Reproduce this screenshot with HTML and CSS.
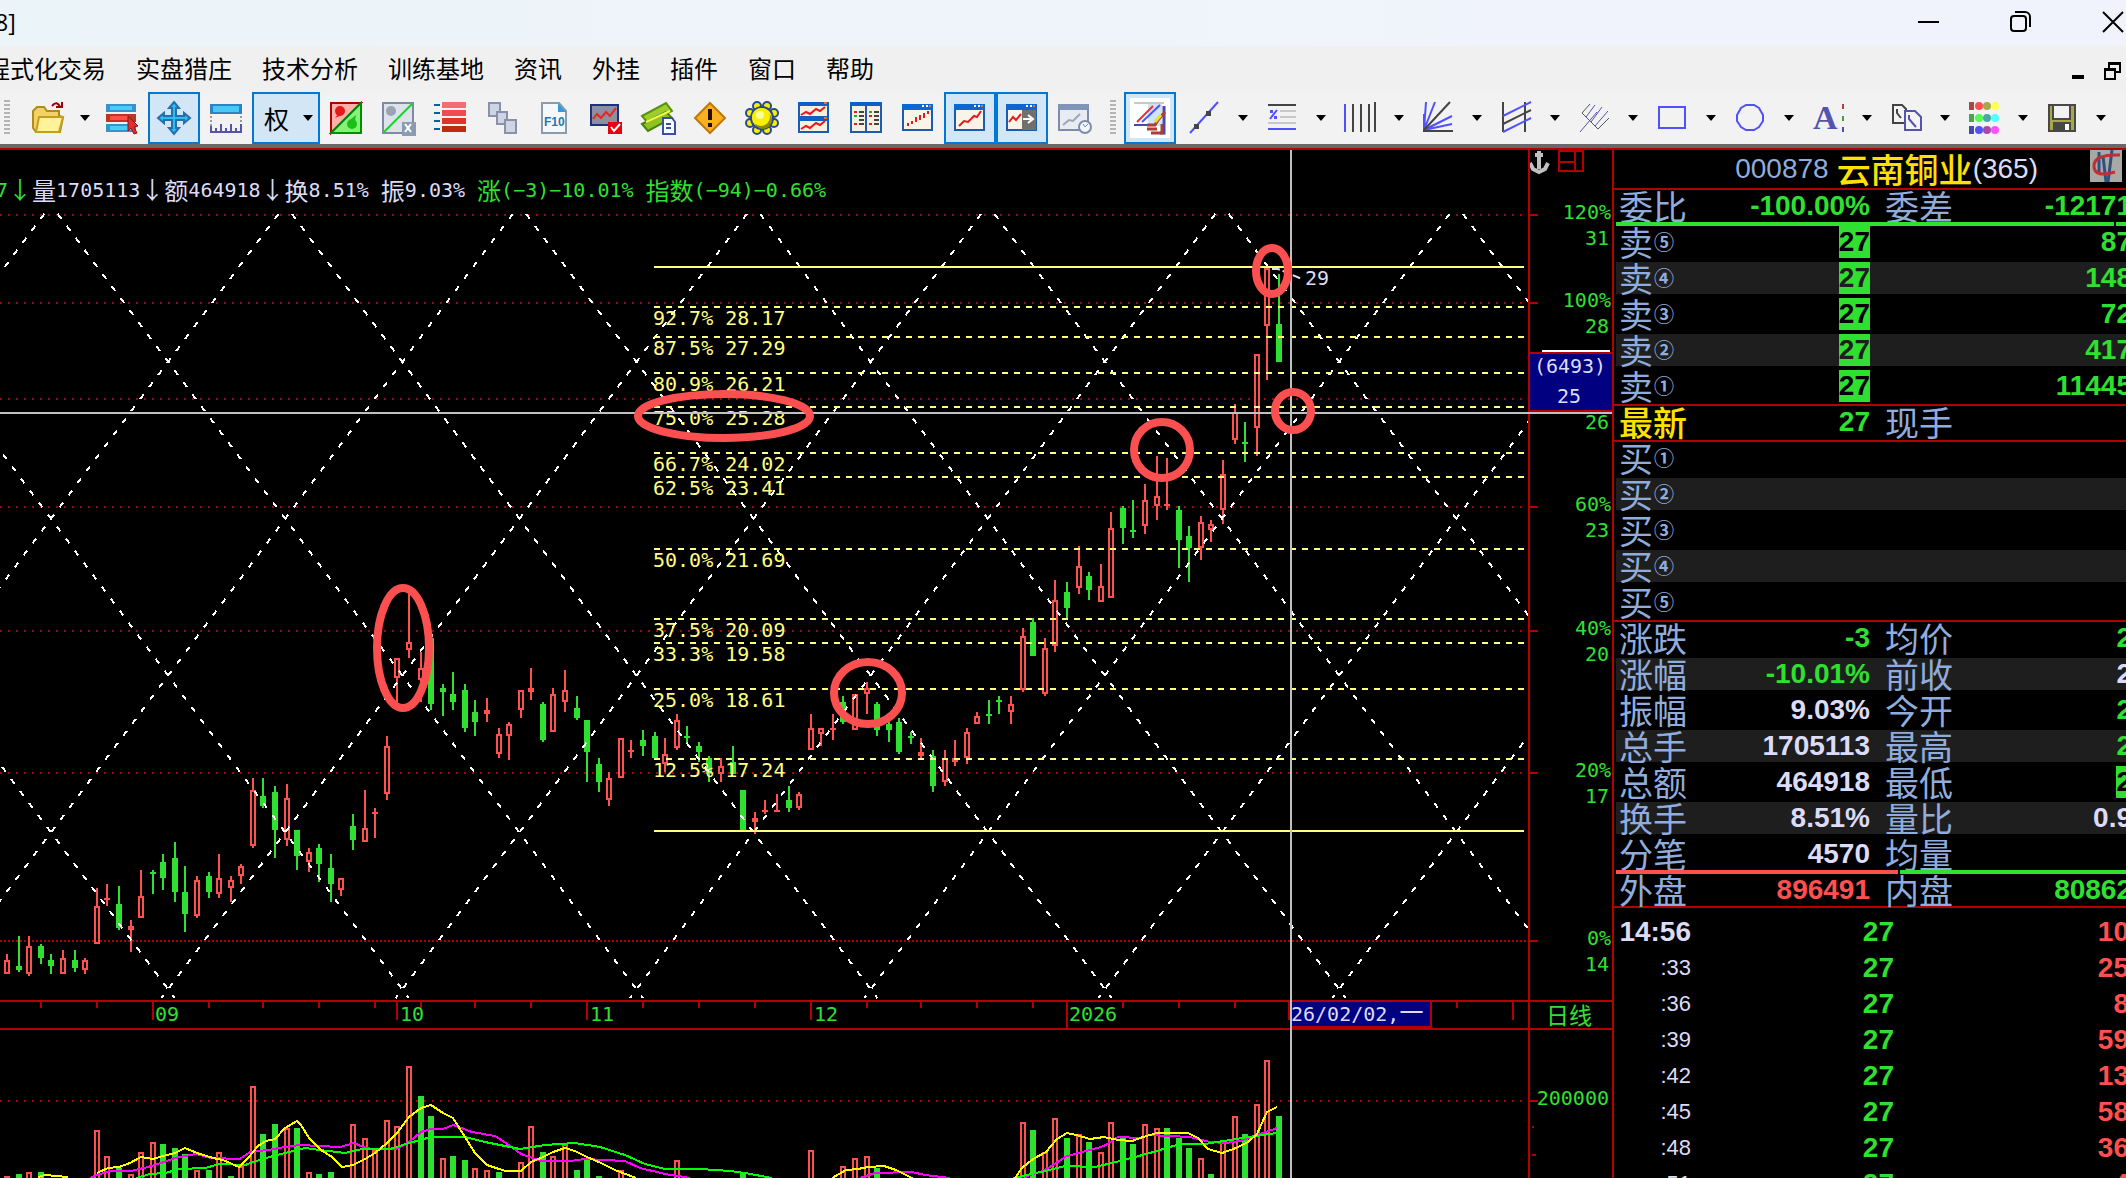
FILE: index.html
```html
<!DOCTYPE html>
<html lang="zh-CN">
<head>
<meta charset="utf-8">
<title>云南铜业</title>
<link rel="stylesheet" href="styles.css">
</head>
<body>
<header class="titlebar">
  <span class="title">8]</span>
  <div class="winctl">
    <button aria-label="最小化"><svg width="22" height="22"><path d="M0 11h21" stroke="#000" stroke-width="2"/></svg></button>
    <button aria-label="还原"><svg width="22" height="22" fill="none" stroke="#000" stroke-width="2"><rect x="1" y="5" width="15" height="15" rx="3"/><path d="M5 1h10a5 5 0 0 1 5 5v10"/></svg></button>
    <button aria-label="关闭"><svg width="22" height="22"><path d="M1 1l20 20M21 1L1 21" stroke="#000" stroke-width="2"/></svg></button>
  </div>
</header>
<nav class="menubar">
  <button>程式化交易</button><button>实盘猎庄</button><button>技术分析</button><button>训练基地</button><button>资讯</button><button>外挂</button><button>插件</button><button>窗口</button><button>帮助</button>
  <div class="mdictl">
    <button aria-label="最小化子窗口"><svg width="16" height="20"><path d="M0 14h12v4H0z"/></svg></button>
    <button aria-label="还原子窗口"><svg width="18" height="20" fill="none" stroke="#000" stroke-width="2"><path d="M5 7V2h11v9h-4M5 3h11"/><path d="M1 8h10v10H1zM1 9h10"/></svg></button>
  </div>
</nav>
<div class="toolbar">
  <i class="grip"></i>
  <button class="tool split folder" aria-label="打开"><svg class="ic" viewBox="0 0 32 32"><path d="M1 9l4-4h7l3 4h12v5l4 1-3 15H4L1 26z" fill="#f3d265" stroke="#b08a1a" stroke-width="2"/><path d="M7 15h24l-4 15H4z" fill="#fff29a" stroke="#c79c22" stroke-width="2"/><path d="M20 4q5-6 8 1M24 5h6V0" fill="none" stroke="#a00000" stroke-width="2"/></svg><svg class="dd" viewBox="0 0 10 6"><path d="M0 0h10L5 6z"/></svg></button>
  <button class="tool" aria-label="列表"><svg class="ic" viewBox="0 0 32 32"><path d="M0 2h30v8H0zM0 22h30v8H0z" fill="#3c90cc"/><path d="M4 4h22v4H4zM4 24h22v4H4z" fill="#48ccf8"/><path d="M0 12h30v8H0z" fill="#c03420"/><path d="M4 14h18v4H4z" fill="#ff5040"/><path d="M22 14l10 10-4 1 3 6-3 1-3-6-3 3z" fill="#e03030" stroke="#901010"/></svg></button>
  <button class="tool on" aria-label="移动"><svg class="ic" viewBox="0 0 32 32"><path d="M16 0l5 6h-3v8h8v-3l6 5-6 5v-3h-8v8h3l-5 6-5-6h3v-8H6v3l-6-5 6-5v3h8V6h-3z" fill="#28c0f0" stroke="#2a6cae" stroke-width="2"/></svg></button>
  <button class="tool" aria-label="标尺"><svg class="ic" viewBox="0 0 32 32"><path d="M0 2h32v10H0z" fill="#2c84c4"/><path d="M3 4h26v6H3z" fill="#48c8f4"/><path d="M1 14v10M31 14v10" stroke="#444" stroke-width="1" stroke-dasharray="2 2"/><path d="M0 30h32M1 24v6M6 26v4M11 22v8M16 26v4M21 22v8M26 26v4M31 22v8" stroke="#5454ac" stroke-width="2"/></svg></button>
  <button class="tool split right on" aria-label="复权"><span class="quan">权</span><svg class="dd" viewBox="0 0 10 6"><path d="M0 0h10L5 6z"/></svg></button>
  <button class="tool" aria-label="涨跌幅"><svg class="ic" viewBox="0 0 32 32"><path d="M1 1h30L1 31z" fill="#ffb0a8" stroke="#b00000" stroke-width="2"/><path d="M31 1v30H1z" fill="#88f078" stroke="#009000" stroke-width="2"/><circle cx="10" cy="9" r="5" fill="#e81818"/><path d="M5 16l4-5 3 2z" fill="#e81818"/><circle cx="22" cy="22" r="5" fill="#18c018"/><path d="M21 17l5-4-1 6z" fill="#18c018"/><path d="M1 31L31 1" stroke="#206020"/></svg></button>
  <button class="tool" aria-label="取消涨跌幅"><svg class="ic" viewBox="0 0 32 32"><path d="M1 1h30v30H1z" fill="#dde2ea" stroke="#7e8aa4" stroke-width="2"/><circle cx="9" cy="9" r="5" fill="#98a4b4"/><path d="M2 30L30 2" stroke="#10d820" stroke-width="2"/><path d="M20 20h14v14H20z" fill="#8c9cb0"/><path d="M23 22l6 8M29 22l-6 8" stroke="#fff" stroke-width="2"/></svg></button>
  <button class="tool" aria-label="排行"><svg class="ic" viewBox="0 0 32 32"><path d="M0 3h6M0 11h6M0 19h6M0 27h6" stroke="#0060a0" stroke-width="2"/><path d="M8 0h24v6H8z" fill="#f46c74"/><path d="M8 8h24v6H8z" fill="#f04c50"/><path d="M8 16h24v6H8z" fill="#e03428"/><path d="M8 24h24v6H8z" fill="#c02a10"/></svg></button>
  <button class="tool" aria-label="层叠"><svg class="ic" viewBox="0 0 32 32" fill="#cfd4e2" stroke="#8890aa" stroke-width="2"><path d="M3 1h11v13H3z"/><path d="M11 10h10v12H11z"/><path d="M19 18h11v13H19z"/></svg></button>
  <button class="tool" aria-label="F10"><svg class="ic" viewBox="0 0 32 32"><path d="M4 1h17l7 8v22H4z" fill="#f4f8fc" stroke="#8a9cac" stroke-width="2"/><path d="M20 1l8 9h-8z" fill="#3898d8"/><text x="6" y="24" class="f10">F10</text></svg></button>
  <button class="tool" aria-label="走势"><svg class="ic" viewBox="0 0 32 32"><path d="M1 3h27v20H1z" fill="#8c909c" stroke="#203080" stroke-width="2"/><path d="M3 17l4-5 4 4 5-6 4 4 6-8" fill="none" stroke="#f02020" stroke-width="2"/><path d="M18 20h14v12H18z" fill="#e80010"/><path d="M21 25l3 4 6-7" fill="none" stroke="#fff" stroke-width="2"/></svg></button>
  <button class="tool" aria-label="资金"><svg class="ic" viewBox="0 0 32 32"><path d="M0 14L24 1l6 8-24 12z" fill="#9cd028" stroke="#5c9010" stroke-width="2"/><path d="M0 22l24-12 6 6-24 13z" fill="#8cc420" stroke="#4c8010" stroke-width="2"/><path d="M4 20l24-11" stroke="#f8f850" stroke-width="2"/><path d="M21 16h9l3 4v12H21z" fill="#fff" stroke="#3850a8" stroke-width="2"/><path d="M24 22h5M24 26h5" stroke="#3850a8" stroke-width="2"/></svg></button>
  <button class="tool" aria-label="警告"><svg class="ic" viewBox="0 0 32 32"><path d="M16 1l15 15-15 15L1 16z" fill="#fcb020" stroke="#c07808" stroke-width="2"/><path d="M16 7v11M16 21v4" stroke="#201000" stroke-width="4"/></svg></button>
  <button class="tool" aria-label="设置"><svg class="ic" viewBox="0 0 32 32"><g stroke="#284890" stroke-width="2" fill="#f8f000"><circle cx="11" cy="4" r="4"/><circle cx="21" cy="4" r="4"/><circle cx="28" cy="11" r="4"/><circle cx="28" cy="21" r="4"/><circle cx="21" cy="28" r="4"/><circle cx="11" cy="28" r="4"/><circle cx="4" cy="21" r="4"/><circle cx="4" cy="11" r="4"/><circle cx="16" cy="16" r="11"/></g><circle cx="17" cy="18" r="9" fill="#908800"/><circle cx="15" cy="15" r="9" fill="#f8f000"/><circle cx="14" cy="13" r="4" fill="#ffffa0"/></svg></button>
  <button class="tool" aria-label="双窗横排"><svg class="ic" viewBox="0 0 32 32"><path d="M1 1h29v14H1zM1 16h29v14H1z" fill="#f6f0e0" stroke="#1c5cb0" stroke-width="2"/><path d="M0 0h31v4H0zM0 15h31v4H0z" fill="#0c60c8"/><path d="M26 1h3M26 16h3" stroke="#f07020" stroke-width="2"/><path d="M3 13l5-3 4 2 6-5 4 2 5-4M3 27l5-3 4 2 6-5 4 2 5-4" fill="none" stroke="#e81820" stroke-width="2"/></svg></button>
  <button class="tool" aria-label="双窗竖排"><svg class="ic" viewBox="0 0 32 32"><path d="M1 1h15v29H1zM16 1h15v29H16z" fill="#f6f0e0" stroke="#1c5cb0" stroke-width="2"/><path d="M0 0h32v4H0z" fill="#0c60c8"/><path d="M4 10h3M4 22h3M19 14h3M19 22h3" stroke="#e02020" stroke-width="2"/><path d="M4 14h3M19 10h3" stroke="#20b030" stroke-width="2"/><path d="M9 10h5M9 14h5M9 18h5M9 22h5M24 10h5M24 14h5M24 18h5M24 22h5" stroke="#444" stroke-width="2"/></svg></button>
  <button class="tool" aria-label="成交"><svg class="ic" viewBox="0 0 32 32"><use href="#win"/><path d="M6 24v-3M10 22v-3M14 20v-5M18 18v-5M22 16v-5M26 12V9" stroke="#e81820" stroke-width="2"/></svg></button>
  <button class="tool on" aria-label="分时"><svg class="ic" viewBox="0 0 32 32"><use href="#win"/><path d="M5 24l5-5 4 1 6-6 3 1 4-6" fill="none" stroke="#e81820" stroke-width="2"/></svg></button>
  <button class="tool on" aria-label="右移"><svg class="ic" viewBox="0 0 32 32"><use href="#win"/><path d="M16 8h14v20H16z" fill="#70706c"/><path d="M3 20l4-5 3 3 5-6" fill="none" stroke="#e81820" stroke-width="2"/><path d="M17 17h8M22 13l5 4-5 4" fill="none" stroke="#fff" stroke-width="2"/></svg></button>
  <button class="tool" aria-label="回放"><svg class="ic" viewBox="0 0 32 32"><path d="M1 3h29v25H1z" fill="#e8ebf0" stroke="#7c8cac" stroke-width="2"/><path d="M0 2h31v6H0z" fill="#8094b8"/><path d="M5 23l6-5 4 1 7-7" fill="none" stroke="#98a8bc" stroke-width="2"/><circle cx="27" cy="25" r="6" fill="#f4f6fa" stroke="#7c8cac" stroke-width="2"/><path d="M25 22l2 3 3-3" fill="none" stroke="#7c8cac"/></svg></button>
  <i class="grip second"></i>
  <button class="tool on draw" aria-label="画线"><svg class="ic big" viewBox="0 0 40 40"><path d="M0 0h40v40H0z" fill="#fff"/><path d="M18 6h14v22H18z" fill="#cfe4f8"/><path d="M4 5h30" stroke="#c8c8c8" stroke-width="2"/><path d="M4 27h20" stroke="#4848a8" stroke-width="2"/><path d="M34 8v27h-4" fill="none" stroke="#4848a8" stroke-width="3"/><path d="M7 24L23 8" stroke="#e83030" stroke-width="2"/><path d="M12 24L30 7" stroke="#5050ff" stroke-width="2"/><path d="M17 27h8l3-5 7-8M17 31h10M21 35h11v-9" fill="none" stroke="#a84038" stroke-width="3"/><path d="M25 24l6-7" stroke="#f0e020" stroke-width="3"/></svg></button>
  <div class="drawtools">
  <button class="tool split" aria-label="直线"><svg class="ic" viewBox="0 0 32 32"><path d="M2 31L30 0" stroke="#5050ff" stroke-width="2"/><path d="M6 22h5v5H6zM18 9h5v5h-5z" fill="#444"/></svg><svg class="dd" viewBox="0 0 10 6"><path d="M0 0h10L5 6z"/></svg></button>
  <button class="tool split" aria-label="黄金分割"><svg class="ic" viewBox="0 0 32 32"><path d="M2 3h28" stroke="#444" stroke-width="2"/><path d="M14 9h16M14 15h16M2 21h28" stroke="#c8c8c8" stroke-width="2"/><path d="M2 27h28" stroke="#5050ff" stroke-width="2"/><path d="M11 8l-7 9" stroke="#5050ff" stroke-width="2"/><path d="M4 8h3v3H4zM8 14h3v3H8z" fill="#5050ff"/></svg><svg class="dd" viewBox="0 0 10 6"><path d="M0 0h10L5 6z"/></svg></button>
  <button class="tool split" aria-label="周期线"><svg class="ic" viewBox="0 0 32 32"><path d="M1 2v28" stroke="#5050ff" stroke-width="2"/><path d="M9 2v28M17 2v28M25 2v28M31 0v30" stroke="#444" stroke-width="2"/></svg><svg class="dd" viewBox="0 0 10 6"><path d="M0 0h10L5 6z"/></svg></button>
  <button class="tool split" aria-label="扇形线"><svg class="ic" viewBox="0 0 32 32"><path d="M2 28L4 0M2 28L13 0M2 28l28-14M2 28l28-6M2 12v16" stroke="#5050ff" stroke-width="2"/><path d="M2 28L28 0M1 29h30" stroke="#444" stroke-width="2"/></svg><svg class="dd" viewBox="0 0 10 6"><path d="M0 0h10L5 6z"/></svg></button>
  <button class="tool split" aria-label="通道线"><svg class="ic" viewBox="0 0 32 32"><path d="M3 0v30M25 0v30M3 22L31 8" stroke="#444" stroke-width="2"/><path d="M3 14L31 0M3 30l28-14" stroke="#5050ff" stroke-width="2"/></svg><svg class="dd" viewBox="0 0 10 6"><path d="M0 0h10L5 6z"/></svg></button>
  <button class="tool split" aria-label="平行线"><svg class="ic" viewBox="0 0 32 32"><path d="M12 2L4 11l16 16M20 27l11-11" fill="none" stroke="#555" stroke-width="1"/><path d="M2 30L19 10M8 15l9-12M13 20L24 5M17 24L30 9" stroke="#5454ac" stroke-width="1"/></svg><svg class="dd" viewBox="0 0 10 6"><path d="M0 0h10L5 6z"/></svg></button>
  <button class="tool split" aria-label="矩形"><svg class="ic" viewBox="0 0 32 32"><path d="M3 5h26v21H3z" fill="none" stroke="#5050ff" stroke-width="2"/></svg><svg class="dd" viewBox="0 0 10 6"><path d="M0 0h10L5 6z"/></svg></button>
  <button class="tool split" aria-label="圆"><svg class="ic" viewBox="0 0 32 32"><path d="M12 3h8l5 3 4 7v6l-4 6-5 3h-8l-5-3-4-6v-6l4-7z" fill="none" stroke="#5050ff" stroke-width="2"/></svg><svg class="dd" viewBox="0 0 10 6"><path d="M0 0h10L5 6z"/></svg></button>
  <button class="tool split" aria-label="文字"><svg class="ic" viewBox="0 0 32 32"><text x="1" y="27" class="letter">A</text><path d="M31 2v5" stroke="#b04040" stroke-width="2"/><path d="M31 14v5" stroke="#40a040" stroke-width="2"/><path d="M31 25v5" stroke="#5050a0" stroke-width="2"/></svg><svg class="dd" viewBox="0 0 10 6"><path d="M0 0h10L5 6z"/></svg></button>
  <button class="tool split" aria-label="复制"><svg class="ic" viewBox="0 0 32 32" fill="#f4f4f4" stroke-width="2"><path d="M3 3h9l4 4v14H3zM7 7v4l4 5" stroke="#444"/><path d="M15 9h10l6 6v13H15zM19 13v4l7 8" stroke="#5454ac"/></svg><svg class="dd" viewBox="0 0 10 6"><path d="M0 0h10L5 6z"/></svg></button>
  <button class="tool split" aria-label="颜色"><svg class="ic" viewBox="0 0 32 32"><path d="M1 0h5v8H1z" fill="#a84848"/><circle cx="11" cy="4" r="4" fill="#ff5050"/><circle cx="19" cy="4" r="4" fill="#a8a848"/><circle cx="27" cy="4" r="4" fill="#ffff50"/><path d="M1 12h5v8H1z" fill="#48a848"/><circle cx="11" cy="16" r="4" fill="#50ff50"/><circle cx="19" cy="16" r="4" fill="#48a8a8"/><circle cx="27" cy="16" r="4" fill="#50ffff"/><path d="M1 24h5v8H1z" fill="#4848a8"/><circle cx="11" cy="28" r="4" fill="#5050ff"/><circle cx="19" cy="28" r="4" fill="#a848a8"/><circle cx="27" cy="28" r="4" fill="#ff50ff"/></svg><svg class="dd" viewBox="0 0 10 6"><path d="M0 0h10L5 6z"/></svg></button>
  <button class="tool split" aria-label="保存"><svg class="ic" viewBox="0 0 32 32"><path d="M3 3h26v26H3z" fill="#a8a848" stroke="#484848" stroke-width="2"/><path d="M7 3h17v14H7z" fill="#f2f2f2" stroke="#484848" stroke-width="2"/><path d="M7 20h18v10H7z" fill="#484848"/><path d="M19 22h4v6h-4z" fill="#fff"/></svg><svg class="dd" viewBox="0 0 10 6"><path d="M0 0h10L5 6z"/></svg></button>
  </div>
</div>
<svg class="defs" width="0" height="0"><defs><g id="win"><path d="M1 3h29v25H1z" fill="#f8f4e8" stroke="#b8a888" stroke-width="2"/><path d="M0 2h31v6H0z" fill="#0c68d0"/><path d="M1 8v21M30 8v21M0 28h31" stroke="#1c5cb0" stroke-width="2"/><path d="M20 4h2M24 4h2" stroke="#fff" stroke-width="2"/><path d="M27 4h2" stroke="#f07020" stroke-width="2"/></g></defs></svg>

<main class="workspace">
  <section class="charts">
    <div class="pane price">
      <p class="info"><span class="up">7<i>↓</i></span><b>量</b>1705113<i>↓</i><b>额</b>464918<i>↓</i><b>换</b>8.51% <b>振</b>9.03% <span class="up"><b>涨</b>(−3)−10.01% <b>指数</b>(−94)−0.66%</span></p>
      <svg class="plot"><g transform="translate(0,-210)">
        <g class="dots"><path d="M0 215H1528M0 303H1528M0 399H1528M0 507H1528M0 631H1528M0 773H1528"/><path class="dense" d="M0 941H1528"/></g>
        <g id="candles"></g>
        <g id="gann" class="gann"></g>
        <g class="fib"><path d="M654 267H1524M654 831H1524"/><path class="dash" d="M654 307H1524M654 337H1524M654 373H1524M654 407H1524M654 453H1524M654 477H1524M654 549H1524M654 619H1524M654 643H1524M654 689H1524M654 759H1524"/></g>
        <g class="fibtext"><text x="653" y="325">92.7% 28.17</text><text x="653" y="355">87.5% 27.29</text><text x="653" y="391">80.9% 26.21</text><text x="653" y="425">75.0% 25.28</text><text x="653" y="471">66.7% 24.02</text><text x="653" y="495">62.5% 23.41</text><text x="653" y="567">50.0% 21.69</text><text x="653" y="637">37.5% 20.09</text><text x="653" y="661">33.3% 19.58</text><text x="653" y="707">25.0% 18.61</text><text x="653" y="777">12.5% 17.24</text></g>
        <path d="M1272 269h6l24 10" class="leader"/><text x="1305" y="285" class="pale">29</text>
      </g></svg>
    </div>
    <svg class="scale"><g transform="translate(-1530,-150)">
      <path d="M1539 151v18M1535 155h8M1530 163l3 6 6 3 6-3 3-6" fill="none" stroke="#c0c0c0" stroke-width="4"/>
      <path d="M1559 151h24v20h-24zM1575 151v20M1559 162h16" class="redline"/>
      <path d="M1530 215h8M1530 303h8M1530 507h8M1530 631h8M1530 773h8M1530 941h8" class="redline"/>
      <g class="up end"><text x="1611" y="219">120%</text><text x="1609" y="245">31</text><text x="1611" y="307">100%</text><text x="1609" y="333">28</text><text x="1609" y="429">26</text><text x="1611" y="511">60%</text><text x="1609" y="537">23</text><text x="1611" y="635">40%</text><text x="1609" y="661">20</text><text x="1611" y="777">20%</text><text x="1609" y="803">17</text><text x="1611" y="945">0%</text><text x="1609" y="971">14</text></g>
      <path d="M1542 351h68" stroke="#fff" stroke-width="2"/>
      <path d="M1530 353h82v58h-82z" fill="#000080"/><path d="M1530 353h82M1530 411h82" class="redline"/>
      <g class="pale mid"><text x="1570" y="373">(6493)</text><text x="1569" y="403">25</text></g>
    </g></svg>
    <div class="timeaxis"><svg class="ticks"><g transform="translate(0,-1002)">
      <path class="redline" d="M41 1002v6M97 1002v6M153 1002v18M209 1002v6M263 1002v6M319 1002v6M375 1002v6M397 1002v18M421 1002v6M475 1002v6M531 1002v6M587 1002v18M643 1002v6M699 1002v6M755 1002v6M811 1002v18M867 1002v6M921 1002v6M977 1002v6M1033 1002v6M1067 1002v26M1123 1002v6M1179 1002v6M1235 1002v6M1289 1002v18M1457 1002v6M1513 1002v18"/>
      <g class="up"><text x="155" y="1021">09</text><text x="400" y="1021">10</text><text x="590" y="1021">11</text><text x="814" y="1021">12</text><text x="1069" y="1021">2026</text></g>
      <path d="M1291 1002h140v24h-140z" fill="#000080"/><path d="M1431 1002v25h-140" class="redline"/>
      <text x="1291" y="1021" class="pale">26/02/02,<tspan class="han">一</tspan></text>
    </g></svg></div>
    <div class="period">日线</div>
    <svg class="volume"><g transform="translate(0,-1030)">
      <g class="dots"><path d="M0 1101H1528"/></g>
      <g id="bars"></g>
      <g class="ma">
        <path stroke="#f0f" d="M90 1178L97 1175 110 1171 131 1171 148 1167 164 1162 175 1158 196 1154 211 1158 240 1159 250 1152 268 1150 285 1147 300 1145 340 1147 354 1143 363 1147 372 1149 396 1149 409 1142 421 1132 431 1129 443 1129 453 1125 472 1132 495 1136 506 1143 521 1154 541 1161 570 1161 585 1159 625 1161 640 1168 665 1174 690 1178M860 1178L875 1173 912 1172 925 1175 950 1178M1025 1177L1045 1170 1067 1156 1090 1150 1104 1146 1118 1137 1140 1138 1150 1135 1190 1137 1210 1142 1225 1143 1240 1141 1257 1135 1277 1128"/>
        <path stroke="#0f0" d="M136 1178L150 1174 165 1173 180 1169 205 1168 220 1164 245 1165 262 1159 285 1153 305 1148 320 1150 345 1153 362 1149 390 1149 409 1143 431 1137 465 1137 485 1142 520 1149 545 1145 575 1143 600 1147 625 1155 645 1164 665 1169 700 1169 730 1171 745 1173 772 1178M1013 1178L1045 1171 1065 1166 1095 1167 1120 1161 1150 1153 1180 1144 1205 1144 1230 1140 1255 1136 1277 1133"/>
        <path stroke="#ff0" d="M38 1177L45 1175 68 1177M97 1173L108 1168 119 1167 130 1163 141 1157 153 1159 163 1156 175 1153 185 1148 197 1153 213 1158 223 1160 239 1167 248 1158 258 1146 266 1141 275 1139 285 1128 297 1121 301 1125 309 1138 321 1150 332 1157 342 1167 353 1165 365 1159 375 1153 387 1143 397 1133 409 1117 421 1108 431 1105 443 1113 453 1118 465 1137 475 1153 487 1165 499 1169 506 1171 521 1171 531 1162 543 1157 553 1152 565 1148 575 1151 587 1157 601 1163 615 1170 636 1178M832 1178L846 1170 858 1169 868 1167 884 1166 896 1170 908 1176 914 1179M1015 1178L1022 1168 1033 1159 1046 1152 1057 1139 1067 1133 1076 1135 1090 1139 1104 1137 1118 1140 1132 1141 1143 1137 1157 1133 1188 1133 1198 1138 1208 1149 1222 1153 1236 1148 1248 1142 1257 1134 1267 1112 1277 1107"/>
      </g>
    </g></svg>
    <svg class="volscale"><g transform="translate(-1530,-1030)"><path d="M1530 1101h8M1532 1127h2M1532 1155h4" class="redline"/><text x="1609" y="1105" class="up end">200000</text></g></svg>
    <i class="cross-v"></i><i class="cross-h"></i>
    <svg class="marks"><g transform="translate(0,-150)"><ellipse cx="403" cy="648" rx="26" ry="60"/><ellipse cx="868" cy="693" rx="34" ry="31"/><ellipse cx="1162" cy="450" rx="28" ry="28"/><ellipse cx="1272" cy="271" rx="16" ry="23"/><ellipse cx="1293" cy="411" rx="18" ry="19"/><ellipse cx="724" cy="416" rx="86" ry="22"/></g></svg>
  </section>

  <aside class="quote">
    <h1><span class="code">000878</span> <span class="name">云南铜业</span><span class="lot">(365)</span>
      <svg class="logo" viewBox="0 0 32 32"><path d="M0 0h32v32H0z" fill="#a8a8a4"/><path d="M13 6l3 26M22 0l-4 32M9 2v20" stroke="#305080" stroke-width="3" fill="none"/><path d="M30 5Q4 4 4 16t21 6" stroke="#c03030" stroke-width="3" fill="none"/></svg></h1>
    <table class="sheet"><colgroup><col class="c1"><col class="c2"><col class="c3"><col></colgroup>
      <tr class="last"><th>委比</th><td class="up">-100.00%</td><th>委差</th><td class="up">-12171</td></tr></table>
    <div class="ratio sell"><i></i><i></i></div>
    <table class="sheet stripe tall"><colgroup><col class="c1"><col class="c2"><col class="c3"><col></colgroup>
      <tr><th>卖<small>⑤</small></th><td><mark>27</mark></td><th></th><td class="up">87</td></tr>
      <tr><th>卖<small>④</small></th><td><mark>27</mark></td><th></th><td class="up">148</td></tr>
      <tr><th>卖<small>③</small></th><td><mark>27</mark></td><th></th><td class="up">72</td></tr>
      <tr><th>卖<small>②</small></th><td><mark>27</mark></td><th></th><td class="up">417</td></tr>
      <tr class="last"><th>卖<small>①</small></th><td><mark>27</mark></td><th></th><td class="up">11445</td></tr></table>
    <table class="sheet tall"><colgroup><col class="c1"><col class="c2"><col class="c3"><col></colgroup>
      <tr class="last"><th class="latest">最新</th><td class="up">27</td><th>现手</th><td></td></tr></table>
    <table class="sheet stripe tall"><colgroup><col class="c1"><col class="c2"><col class="c3"><col></colgroup>
      <tr><th>买<small>①</small></th><td></td><th></th><td></td></tr>
      <tr><th>买<small>②</small></th><td></td><th></th><td></td></tr>
      <tr><th>买<small>③</small></th><td></td><th></th><td></td></tr>
      <tr><th>买<small>④</small></th><td></td><th></th><td></td></tr>
      <tr class="last"><th>买<small>⑤</small></th><td></td><th></th><td></td></tr></table>
    <table class="sheet stripe"><colgroup><col class="c1"><col class="c2"><col class="c3"><col></colgroup>
      <tr><th>涨跌</th><td class="up">-3</td><th>均价</th><td class="up">2</td></tr>
      <tr><th>涨幅</th><td class="up">-10.01%</td><th>前收</th><td>2</td></tr>
      <tr><th>振幅</th><td>9.03%</td><th>今开</th><td class="up">2</td></tr>
      <tr><th>总手</th><td>1705113</td><th>最高</th><td class="up">2</td></tr>
      <tr><th>总额</th><td>464918</td><th>最低</th><td><mark>2</mark></td></tr>
      <tr><th>换手</th><td>8.51%</td><th>量比</th><td>0.9</td></tr>
      <tr class="last"><th>分笔</th><td>4570</td><th>均量</th><td></td></tr></table>
    <div class="ratio deal"><i></i><i></i></div>
    <table class="sheet ruled"><colgroup><col class="c1"><col class="c2"><col class="c3"><col></colgroup>
      <tr class="last"><th>外盘</th><td class="red">896491</td><th>内盘</th><td class="up">80862</td></tr></table>
    <table class="sheet tape">
      <tr><td class="full">14:56</td><td class="up">27</td><td class="red">10</td></tr>
      <tr><td>:33</td><td class="up">27</td><td class="red">25</td></tr>
      <tr><td>:36</td><td class="up">27</td><td class="red">8</td></tr>
      <tr><td>:39</td><td class="up">27</td><td class="red">59</td></tr>
      <tr><td>:42</td><td class="up">27</td><td class="red">13</td></tr>
      <tr><td>:45</td><td class="up">27</td><td class="red">58</td></tr>
      <tr><td>:48</td><td class="up">27</td><td class="red">36</td></tr>
      <tr><td>:51</td><td class="up">27</td><td class="red">4</td></tr></table>
  </aside>
</main>
<script src="chart.js"></script>
</body>
</html>
```

FILE: styles.css
```css
* { box-sizing: border-box; }
body {
  margin: 0;
  height: 100vh;
  display: flex;
  flex-direction: column;
  overflow: hidden;
  background: #000;
  font-family: "Noto Sans CJK SC", sans-serif;
}
button { border: 0; padding: 0; background: none; font: inherit; color: inherit; }
.defs { position: absolute; }

.titlebar {
  flex: none;
  height: 46px;
  display: flex;
  justify-content: space-between;
  align-items: center;
  padding-bottom: 2px;
  background: linear-gradient(90deg, #ebf4f8, #f0f3fb 70%);
}
.title { margin-left: -5px; font: 23px "Open Sans", sans-serif; }
.winctl { display: flex; gap: 70px; margin-right: 2px; }
.winctl button { width: 22px; height: 22px; }
.winctl svg, .mdictl svg { display: block; }

.menubar {
  flex: none;
  height: 46px;
  display: flex;
  align-items: center;
  margin-left: -29px;
  background: #f0f0f0;
  font-size: 24px;
  line-height: 42px;
}
.menubar > button { padding: 0 15px 2px; flex: none; }
.mdictl { margin-left: auto; margin-right: 4px; display: flex; gap: 16px; }
.mdictl button { height: 20px; margin-top: 4px; }

.toolbar {
  flex: none;
  height: 56px;
  display: flex;
  background: #f2f2f2;
  border-bottom: 4px solid;
  border-image: linear-gradient(#a0a0a0 50%, #696969 50%) 4;
}
.grip {
  flex: none;
  width: 6px;
  height: 34px;
  margin: 8px 12px 0 4px;
  background: repeating-linear-gradient(#b4b4b4 0 2px, transparent 2px 4px);
}
.grip.second { margin: 8px 8px 0 10px; }
.tool {
  flex: none;
  width: 52px;
  height: 52px;
  display: flex;
  align-items: center;
  justify-content: center;
}
.tool.on { background: #d2e6f5; border: 2px solid #0078d7; }
.ic { width: 32px; height: 32px; overflow: visible; }
.ic.big { width: 40px; height: 40px; }
.dd { width: 10px; height: 6px; }
.split { width: 78px; justify-content: flex-start; padding-left: 10px; gap: 18px; }
.split.folder { width: 74px; gap: 16px; }
.split.right { width: 68px; gap: 14px; }
.quan { font-size: 25px; line-height: 48px; }
.drawtools { display: flex; margin-left: 2px; }
.f10 { font: bold 12px "Liberation Sans", sans-serif; fill: #1878c0; }
.letter { font: bold 34px "Liberation Serif", serif; fill: #5454ac; }

.workspace {
  flex: 1;
  min-height: 0;
  display: flex;
  border-top: 2px solid #b40000;
}
.charts {
  flex: 1;
  min-width: 0;
  position: relative;
  display: grid;
  grid-template-columns: minmax(0, 1fr) 82px;
  grid-template-rows: 850px 30px minmax(0, 1fr);
  overflow: hidden;
  font-family: "DejaVu Sans Mono", "Noto Sans CJK SC", monospace;
  font-size: 20px;
}
.pane { border-right: 2px solid #b40000; overflow: hidden; }
.info {
  margin: 0 0 0 -4px;
  height: 60px;
  padding-top: 20px;
  line-height: 40px;
  display: flex;
  white-space: pre;
  color: #dcdcf8;
}
.info b { font: 24px/40px "Noto Sans CJK SC", sans-serif; }
.info i { display: inline-block; width: 24px; text-align: center; font: 24px/38px "Noto Sans CJK SC", sans-serif; }
.info .up { display: flex; }
.up { color: #30e030; fill: #30e030; }
.red { color: #ff5050; }
.pale { fill: #dcdcf8; }
.end { text-anchor: end; }
.mid { text-anchor: middle; }
.redline { fill: none; stroke: #b40000; stroke-width: 2px; shape-rendering: crispEdges; }
.plot { display: block; width: 100%; height: 790px; }
.scale, .volscale, .volume, .ticks { display: block; width: 100%; height: 100%; }
.volume { border-right: 2px solid #b40000; }
.timeaxis, .period { border: solid #b40000; border-width: 2px 0; min-width: 0; }
.timeaxis { border-right-width: 2px; }
.period { text-align: center; font: 23px/24px "Noto Sans CJK SC", sans-serif; color: #30e030; padding-right: 4px; }
.han { font-size: 24px; }

.dots path { stroke: #b40000; stroke-width: 2px; stroke-dasharray: 2 6; shape-rendering: crispEdges; }
.dots .dense { stroke-dasharray: 2 2; }
.gann line { stroke: #fff; stroke-width: 2px; stroke-dasharray: 6 9; shape-rendering: crispEdges; }
.fib path { stroke: #ffff80; stroke-width: 2px; shape-rendering: crispEdges; }
.fib .dash { stroke-dasharray: 6 6; }
.fibtext { fill: #ffff80; white-space: pre; }
.leader { fill: none; stroke: #dcdcf8; stroke-width: 2px; stroke-dasharray: 8 3; }
.rise { fill: #000; stroke: #ff5050; stroke-width: 2px; shape-rendering: crispEdges; }
.fall { fill: #30e030; stroke: #30e030; stroke-width: 2px; shape-rendering: crispEdges; }
.ma path { fill: none; stroke-width: 2px; shape-rendering: crispEdges; }

.cross-v { position: absolute; left: 1290px; top: 0; bottom: 0; width: 2px; background: #c0c0c0; }
.cross-h { position: absolute; top: 262px; left: 0; right: 0; height: 2px; background: #c0c0c0; }
.marks { position: absolute; left: 0; top: 0; width: 100%; height: 100%; }
.marks ellipse { fill: none; stroke: #fc5050; stroke-width: 8px; }

.quote {
  flex: none;
  width: 514px;
  overflow: hidden;
  border-left: 2px solid #b40000;
  color: #dcdcf8;
}
.quote h1 {
  margin: 0;
  height: 40px;
  display: flex;
  align-items: center;
  justify-content: flex-end;
  padding-right: 4px;
  border-bottom: 2px solid #b40000;
  font: 28px/38px "Liberation Sans", sans-serif;
}
.code { color: #90acdc; margin-right: 8px; }
.name { font: 500 34px/38px "Noto Sans CJK SC", sans-serif; color: #ffe000; }
.logo { width: 32px; height: 32px; margin-left: 52px; align-self: flex-start; }
.sheet {
  width: calc(100% + 6px);
  table-layout: fixed;
  border-collapse: separate;
  border-spacing: 0;
  font: bold 28px/32px "Liberation Sans", sans-serif;
}
.c1 { width: 106px; }
.c2 { width: 150px; }
.c3 { width: 120px; }
.sheet td, .sheet th { padding: 0; height: 36px; vertical-align: top; white-space: nowrap; }
.sheet .last td, .sheet .last th { height: 32px; }
.sheet.tall .last td, .sheet.tall .last th { height: 34px; }
.sheet.tall .last td, .sheet.tall .last th, .sheet.ruled td, .sheet.ruled th { box-sizing: content-box; border-bottom: 2px solid #b40000; }
.sheet td { text-align: right; }
.sheet th { text-align: left; padding-left: 15px; font: 34px/32px "Noto Sans CJK SC", sans-serif; color: #90acdc; }
.sheet th:first-child { padding-left: 5px; }
.sheet th.latest { color: #ffe000; font-weight: 500; }
.sheet small { font-size: 20px; font-weight: 700; vertical-align: 6px; line-height: 16px; margin-left: 1px; }
.stripe tr:nth-child(even) { background: linear-gradient(#1e1e1e, #1e1e1e) 2px 0 / 100% 32px no-repeat; }
mark { display: inline-block; background: #30e030; color: #000; height: 32px; }
tr:nth-child(even) mark { color: #1e1e1e; }
.ratio { display: flex; gap: 2px; height: 4px; padding-left: 2px; }
.sell i { background: #30e030; flex: 1; }
.sell i:first-child { flex: none; width: 498px; }
.deal i { background: #30e030; flex: 1; }
.deal i:first-child { flex: none; width: 282px; background: #ff5050; }
.tape { margin-top: 6px; }
.tape td { line-height: 36px; }
.tape td:first-child { width: 77px; font-size: 22px; font-weight: normal; }
.tape td.full:first-child { font-size: 28px; font-weight: bold; }
.tape td:nth-child(2) { width: 203px; }
.tape td:nth-child(3) { padding-right: 3px; }
```

FILE: chart.js
```js
const NS = 'http://www.w3.org/2000/svg';
const add = (parent, tag, attrs) => {
  const el = document.createElementNS(NS, tag);
  for (const k in attrs) el.setAttribute(k, attrs[k]);
  parent.appendChild(el);
};

// x, direction, high, body top, body bottom, low
const candles = `7R954,960,974,974 19G936,966,970,972 29R936,946,974,976 41G944,946,958,964 51G954,960,966,974 63R950,958,974,974 75G950,960,968,972 85R958,960,970,974 97R888,906,944,944 107R884,898,900,906 119G886,904,928,930 131R920,926,930,952 141R870,896,918,918 153G870,872,874,894 163G854,862,878,890 175G842,858,892,902 185G866,892,914,932 197R876,880,916,918 209G872,876,892,898 219R854,878,894,898 231R876,880,888,902 241R864,866,876,884 253R778,790,846,848 263G778,796,806,808 275G786,792,830,858 287R784,798,840,846 297G830,830,856,870 309R848,852,862,872 319G844,848,864,882 331G854,868,884,902 341R878,878,890,896 353G814,826,840,850 365R790,828,842,842 375R808,812,814,838 387R736,746,794,800 397R658,658,678,702 409R592,642,650,658 421R652,668,680,702 431G638,638,704,710 443G684,688,692,716 453G672,694,702,710 465G684,690,728,732 475G700,712,722,736 487R698,710,714,722 499R728,734,754,758 509R722,724,736,760 521R690,690,710,718 531R668,688,692,700 543G702,704,740,742 553R688,694,732,732 565R670,690,702,712 577G696,708,718,720 587G720,720,752,782 599G758,764,782,792 609R772,778,800,806 621R738,738,778,778 631R740,750,752,758 643G730,740,746,756 655G732,736,758,758 665R738,754,764,772 677R714,720,748,750 687G726,736,738,744 699G742,746,752,762 709G756,758,774,782 721R758,766,774,782 733G746,762,774,774 743G790,790,830,830 755R812,818,822,834 765R800,810,812,814 777R794,810,812,812 789G786,800,808,812 799R792,794,808,810 811R714,728,750,750 821R728,728,734,746 833R714,728,730,740 843G696,702,722,724 855R694,694,730,730 867R682,688,694,714 877G702,704,730,736 889G722,724,730,742 899G718,722,752,754 911G732,736,738,744 921R738,752,756,758 933G750,756,786,792 945R750,758,782,786 955R740,758,762,766 967R728,732,758,764 977R712,716,724,724 989G700,714,716,724 999G696,700,702,714 1011R696,704,712,724 1023R628,636,690,692 1033G618,622,656,656 1045R638,648,694,696 1055R580,600,646,652 1067G582,592,608,618 1079R546,566,588,594 1089G572,576,590,600 1101R564,586,602,602 1111R512,528,598,598 1123G506,508,528,544 1133G500,530,532,538 1145R484,500,526,534 1157R456,496,506,520 1167R458,504,506,510 1179G506,510,540,568 1189G526,536,548,582 1201R516,522,548,560 1211R520,524,530,542 1223R460,474,510,524 1235R404,412,440,444 1245G422,442,444,462 1257R354,354,428,456 1267R268,268,326,380 1279G274,324,362,362`;
const candleLayer = document.getElementById('candles');
for (const item of candles.split(' ')) {
  const [, x, dir, rest] = item.match(/^(\d+)([RG])(.+)$/);
  const [hi, top, bottom, lo] = rest.split(',').map(Number);
  const cls = dir === 'R' ? 'rise' : 'fall';
  add(candleLayer, 'line', { class: cls, x1: x, x2: x, y1: hi, y2: lo });
  add(candleLayer, 'rect', { class: cls, x: x - 2, y: top + 1, width: 4, height: Math.max(0.1, bottom - top - 2) });
}

// x, direction, top of bar
const volumes = '7R1176 19G1174 29R1172 41G1172 97R1130 107R1156 119G1168 131R1174 141R1152 153R1142 163G1144 175G1148 185G1154 197R1170 209G1170 219R1152 231G1176 241R1166 253R1086 263G1134 275G1124 287R1128 297G1128 309R1172 319G1174 331G1172 353R1124 365R1138 375R1150 387R1120 397R1126 409R1066 421G1096 431G1116 443R1158 453G1156 465G1160 475R1168 487R1170 499G1172 521R1162 531R1126 543G1152 553R1156 565R1144 577G1170 587G1160 599G1176 621R1170 677R1160 743G1172 811R1150 843R1166 855R1158 867R1156 877G1168 1023R1122 1033G1130 1045R1152 1055R1118 1067G1138 1079R1134 1089G1142 1101R1152 1111R1122 1123G1138 1133G1144 1145R1124 1157R1128 1167G1128 1179G1138 1189G1148 1201R1158 1211G1174 1223R1142 1235R1116 1245G1134 1257R1104 1267R1060 1279G1116';
const barLayer = document.getElementById('bars');
for (const item of volumes.split(' ')) {
  const [, x, dir, y] = item.match(/^(\d+)([RG])(\d+)$/);
  add(barLayer, 'rect', { class: dir === 'R' ? 'rise' : 'fall', x: x - 2, y: +y + 1, width: 4, height: 1200 - y });
}

// Gann grid: mirrored diagonals from evenly spaced peaks
const gann = document.getElementById('gann');
for (let n = -3; n < 10; n++) {
  const peak = 51 + 234.2 * n;
  for (const s of [-1, 1]) {
    add(gann, 'line', { x1: peak + s * 6.75, y1: 214, x2: peak + s * 592, y2: 998 });
  }
}
```
